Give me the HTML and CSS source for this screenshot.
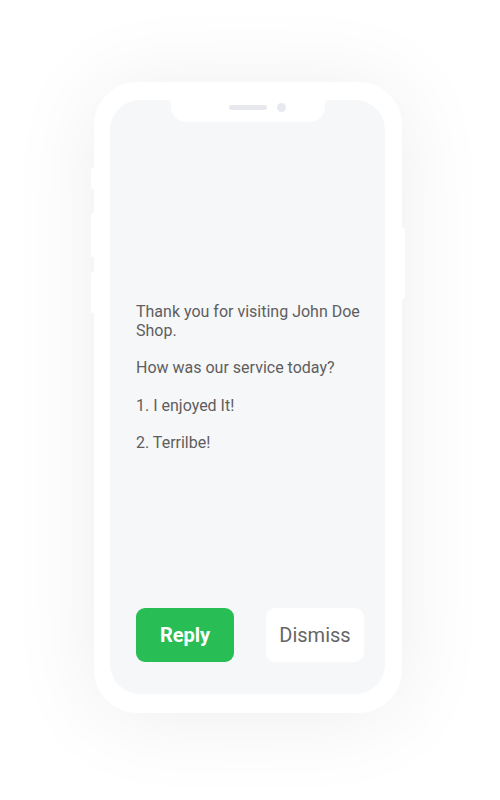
FILE: index.html
```html
<!DOCTYPE html>
<html lang="en">
<head>
<meta charset="utf-8">
<title>SMS Survey</title>
<link rel="stylesheet" href="styles.css">
</head>
<body>
<div class="stage">
  <div class="phone">
    <span class="side-btn left b1"></span>
    <span class="side-btn left b2"></span>
    <span class="side-btn left b3"></span>
    <span class="side-btn right b4"></span>
    <div class="screen">
      <div class="notch">
        <span class="speaker"></span>
        <span class="camera"></span>
      </div>
      <div class="message">
        <p>Thank you for visiting John Doe Shop.</p>
        <p>How was our service today?</p>
        <p>1. I enjoyed It!</p>
        <p>2. Terrilbe!</p>
      </div>
      <div class="actions">
        <button class="btn reply">Reply</button>
        <button class="btn dismiss">Dismiss</button>
      </div>
    </div>
  </div>
</div>
</body>
</html>
```

FILE: styles.css
```css
* { box-sizing: border-box; }

html, body {
  margin: 0;
  padding: 0;
  background: #ffffff;
  font-family: Roboto, "Liberation Sans", Arial, sans-serif;
}

.stage {
  width: 500px;
  height: 800px;
  padding: 82px 0 0 94px;
  overflow: hidden;
}

.phone {
  position: relative;
  width: 308px;
  height: 631px;
  background: #ffffff;
  border-radius: 43px;
  padding: 18px 17px 19px 16px;
  box-shadow: 0 4px 90px rgba(0, 0, 0, 0.075);
}

.side-btn {
  position: absolute;
  width: 5px;
  background: #ffffff;
  border-radius: 2px;
}
.side-btn.left { left: -3px; }
.side-btn.right { right: -3px; }
.b1 { top: 86px; height: 21px; }
.b2 { top: 131px; height: 44px; }
.b3 { top: 190px; height: 41px; }
.b4 { top: 146px; height: 71px; }

.screen {
  position: relative;
  height: 100%;
  background: #f6f7f9;
  border-radius: 30px;
  display: flex;
  flex-direction: column;
  padding: 203px 20px 32px 26px;
}

.notch {
  position: absolute;
  top: 0;
  left: 61px;
  width: 154px;
  height: 22px;
  background: #ffffff;
  border-radius: 0 0 15px 15px;
  display: flex;
  align-items: center;
  padding: 0 0 0 58px;
  gap: 10px;
}
.notch::before,
.notch::after {
  content: "";
  position: absolute;
  top: 0;
  width: 4px;
  height: 4px;
}
.notch::before {
  left: -4px;
  background: radial-gradient(circle at 0 100%, transparent 4px, #ffffff 4.5px);
}
.notch::after {
  right: -4px;
  background: radial-gradient(circle at 100% 100%, transparent 4px, #ffffff 4.5px);
}
.speaker {
  width: 38px;
  height: 5px;
  border-radius: 3px;
  background: #e8e9ee;
  margin-top: -8px;
}
.camera {
  width: 9px;
  height: 9px;
  border-radius: 50%;
  background: #e8e9ee;
  margin-top: -8px;
}

.message {
  color: #5e5e5e;
  font-size: 16px;
  line-height: 18.75px;
}
.message p {
  margin: 0 0 18.75px 0;
}

.actions {
  margin-top: auto;
  display: flex;
  gap: 32px;
}

.btn {
  width: 98px;
  height: 54px;
  border: none;
  border-radius: 9px;
  font-family: Roboto, "Liberation Sans", Arial, sans-serif;
  font-size: 20px;
  padding: 0;
  cursor: pointer;
}
.reply {
  background: #29bd55;
  color: #ffffff;
  font-weight: 700;
}
.dismiss {
  background: #ffffff;
  color: #666666;
  font-weight: 400;
}
```
